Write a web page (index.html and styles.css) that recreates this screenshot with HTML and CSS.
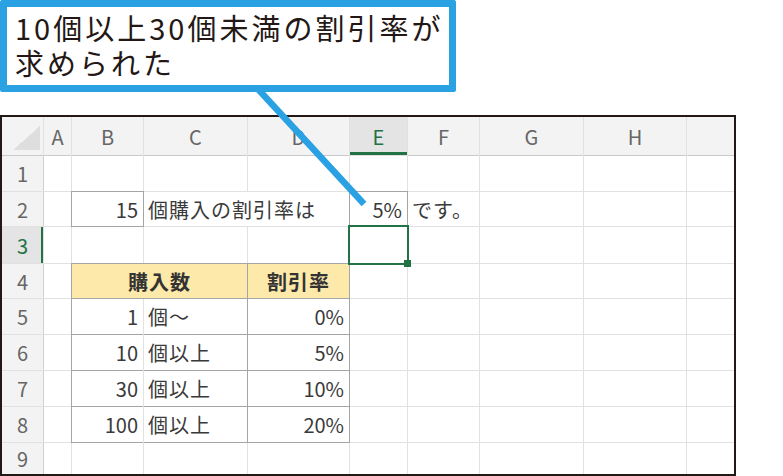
FILE: index.html
```html
<!DOCTYPE html>
<html lang="ja">
<head>
    <meta charset="UTF-8">
    <meta name="viewport" content="width=device-width, initial-scale=1.0">
    <title>割引率</title>
    <link rel="stylesheet" href="styles.css">
</head>
<body>
<div class="page">
    <div class="callout">10個以上30個未満の割引率が<br>求められた</div>

    <div class="sheet">
        <!-- 列見出し -->
        <div class="c hd corner"></div>
        <div class="c hd">A</div>
        <div class="c hd">B</div>
        <div class="c hd">C</div>
        <div class="c hd">D</div>
        <div class="c hd active-col">E</div>
        <div class="c hd">F</div>
        <div class="c hd">G</div>
        <div class="c hd">H</div>
        <div class="c hd"></div>

        <!-- 1 -->
        <div class="c rh">1</div>
        <div class="c"></div><div class="c"></div><div class="c"></div><div class="c"></div>
        <div class="c"></div><div class="c"></div><div class="c"></div><div class="c"></div><div class="c"></div>

        <!-- 2 -->
        <div class="c rh">2</div>
        <div class="c"></div>
        <div class="c t num">15</div>
        <div class="c txt span2">個購入の割引率は</div>
        <div class="c t num">5%</div>
        <div class="c txt">です。</div>
        <div class="c"></div><div class="c"></div><div class="c"></div>

        <!-- 3 -->
        <div class="c rh active-row">3</div>
        <div class="c"></div><div class="c"></div><div class="c"></div><div class="c"></div>
        <div class="c selected"></div>
        <div class="c"></div><div class="c"></div><div class="c"></div><div class="c"></div>

        <!-- 4 -->
        <div class="c rh">4</div>
        <div class="c"></div>
        <div class="c t th span2">購入数</div>
        <div class="c t th">割引率</div>
        <div class="c"></div><div class="c"></div><div class="c"></div><div class="c"></div><div class="c"></div>

        <!-- 5 -->
        <div class="c rh">5</div>
        <div class="c"></div>
        <div class="c t tl num">1</div>
        <div class="c t tr txt">個～</div>
        <div class="c t num">0%</div>
        <div class="c"></div><div class="c"></div><div class="c"></div><div class="c"></div><div class="c"></div>

        <!-- 6 -->
        <div class="c rh">6</div>
        <div class="c"></div>
        <div class="c t tl num">10</div>
        <div class="c t tr txt">個以上</div>
        <div class="c t num">5%</div>
        <div class="c"></div><div class="c"></div><div class="c"></div><div class="c"></div><div class="c"></div>

        <!-- 7 -->
        <div class="c rh">7</div>
        <div class="c"></div>
        <div class="c t tl num">30</div>
        <div class="c t tr txt">個以上</div>
        <div class="c t num">10%</div>
        <div class="c"></div><div class="c"></div><div class="c"></div><div class="c"></div><div class="c"></div>

        <!-- 8 -->
        <div class="c rh">8</div>
        <div class="c"></div>
        <div class="c t tl num">100</div>
        <div class="c t tr txt">個以上</div>
        <div class="c t num">20%</div>
        <div class="c"></div><div class="c"></div><div class="c"></div><div class="c"></div><div class="c"></div>

        <!-- 9 -->
        <div class="c rh">9</div>
        <div class="c"></div><div class="c"></div><div class="c"></div><div class="c"></div>
        <div class="c"></div><div class="c"></div><div class="c"></div><div class="c"></div><div class="c"></div>
    </div>

    <!-- 吹き出しの引き出し線 -->
    <svg class="leader" width="783" height="476" viewBox="0 0 783 476">
        <line x1="257" y1="88" x2="364" y2="204" stroke="#29a1e2" stroke-width="6.5"/>
    </svg>
</div>
</body>
</html>
```

FILE: styles.css
```css
body {
    margin: 0;
    background: #fff;
    font-family: "Noto Sans CJK JP", sans-serif;
}
.page {
    position: relative;
    width: 783px;
    height: 476px;
    overflow: hidden;
}

/* 吹き出し */
.callout {
    box-sizing: border-box;
    width: 456px;
    height: 92px;
    border: 7px solid #29a1e2;
    border-radius: 2px;
    padding: 3px 0 0 8px;
    font-size: 29px;
    line-height: 35px;
    letter-spacing: 3px;
    color: #231815;
    white-space: nowrap;
    background: #fff;
}
.leader {
    position: absolute;
    left: 0;
    top: 0;
    pointer-events: none;
}

/* シート */
.sheet {
    box-sizing: border-box;
    width: 736px;
    height: 361px;
    margin-top: 23px;
    border: 2px solid #231815;
    display: grid;
    grid-template-columns: 41px 27px 71px 103px 101px 57px 71px 103px 102px 1fr;
    grid-template-rows: 38px 35px 34px 36px 34px 35px 35px 35px 35px 1fr;
    gap: 1px;
    background: #e1e1e1;
    font-size: 20px;
    color: #3a3a3a;
}
.c {
    background: #fff;
    display: flex;
    align-items: center;
    white-space: nowrap;
    min-width: 0;
}
.hd {
    background: #f3f3f3;
    color: #666;
    justify-content: center;
    box-shadow: 0 1px 0 #cacaca;
}
.rh {
    background: #f3f3f3;
    color: #666;
    justify-content: center;
    box-shadow: 1px 0 0 #d0d0d0;
}
.corner {
    position: relative;
}
.corner::after {
    content: "";
    position: absolute;
    right: 3px;
    bottom: 5px;
    width: 27px;
    height: 24px;
    background: linear-gradient(to bottom right, transparent 50%, #dedede 50%);
}
.active-col {
    background: #e4e4e4;
    color: #217346;
    box-shadow: inset 0 -3px 0 #217346;
}
.active-row {
    background: #e4e4e4;
    color: #217346;
    box-shadow: inset -2px 0 0 #217346;
}

.span2 {
    grid-column: span 2;
}
.num {
    justify-content: flex-end;
    padding-right: 5px;
}
.txt {
    padding-left: 4px;
    letter-spacing: 1px;
}

/* 罫線つきのセル */
.t {
    margin: -1px;
    border: 1px solid #a5a5a5;
}
.tl {
    border-right: 0;
    margin-right: 0;
}
.tr {
    border-left: 0;
    margin-left: 0;
}
.th {
    background: #fde9a9;
    font-weight: bold;
    justify-content: center;
    letter-spacing: 1px;
    color: #333;
}

/* アクティブセル */
.selected {
    position: relative;
    z-index: 2;
    box-shadow: 0 0 0 2px #217346;
}
.selected::after {
    content: "";
    position: absolute;
    right: -4px;
    bottom: -4px;
    width: 7px;
    height: 7px;
    background: #217346;
}
```
